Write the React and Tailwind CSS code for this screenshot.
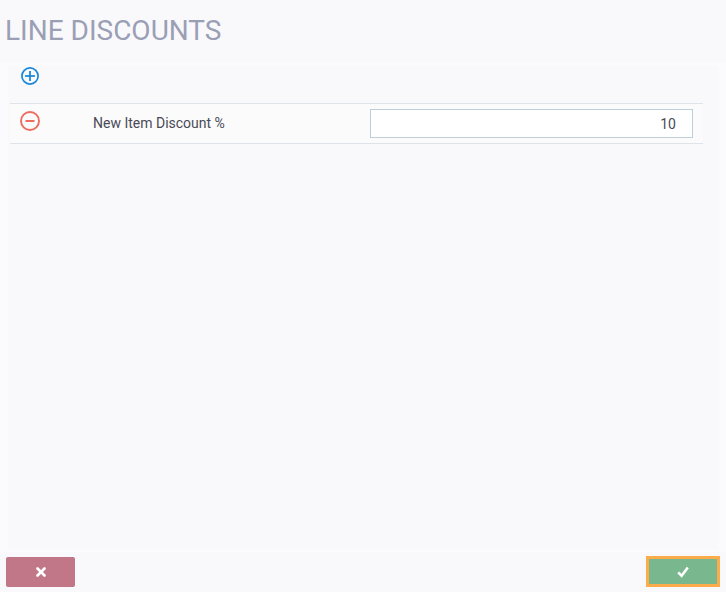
import { X } from "lucide-react";

function CircleIcon({ color, size, plus }) {
  return (
    <svg width={size} height={size} viewBox="0 0 20 20" fill="none" stroke={color} strokeWidth="1.9">
      <circle cx="10" cy="10" r="9" />
      <path d={plus ? "M4.5 10h11" : "M5.5 10h9"} strokeWidth="2" />
      {plus && <path d="M10 4.5v11" strokeWidth="2" />}
    </svg>
  );
}

export default function App() {
  return (
    <div className="h-[592px] w-[726px] overflow-hidden bg-[#fbfbfd] flex flex-col font-['Roboto',sans-serif]">
      <div className="h-[62px] mb-[4px] shrink-0 bg-[#f9f9fc] pl-[5px] pt-[13px]">
        <h1 className="text-[28px] leading-[36px] text-[#9b9fb5]">LINE DISCOUNTS</h1>
      </div>

      <div className="mx-2 h-[483px] shrink-0 bg-[#f9f9fc] pl-[2px] pr-[15px]">
        <div className="h-[37px] pl-[10.5px] pt-[1px]">
          <CircleIcon color="#1a88d8" size={18} plus />
        </div>
        <div className="h-[41px] flex items-center border-y border-[#dfe3ea] bg-[#fbfbfc]">
          <div className="w-[83px] pl-[10px] pb-[5px] shrink-0">
            <CircleIcon color="#ee6b5f" size={20} />
          </div>
          <div className="w-[277px] shrink-0 text-[14px] text-[#4a4a55]">New Item Discount %</div>
          <input
            readOnly
            value="10"
            className="h-[29px] w-[323px] border border-[#bfcfd9] bg-white px-4 text-right text-[14px] text-[#4a4a55] outline-none"
          />
        </div>
      </div>

      <div className="mt-[3px] flex flex-1 items-start justify-between bg-[#f9f9fc] px-[6px] pt-[4px]">
        <button className="mt-[1px] flex h-[30px] w-[69px] items-center justify-center rounded-[2px] bg-[#c27788] text-white">
          <X size={14} strokeWidth={4.5} />
        </button>
        <button className="flex h-[31px] w-[74px] items-center justify-center border-[3px] border-[#fdac4b] bg-[#79b78e] text-white">
          <svg width="12" height="12" viewBox="0 0 12 12" fill="none" stroke="currentColor" strokeWidth="2.6">
            <path d="M1.2 6.4 4.6 9.8 10.8 1.4" />
          </svg>
        </button>
      </div>
    </div>
  );
}
